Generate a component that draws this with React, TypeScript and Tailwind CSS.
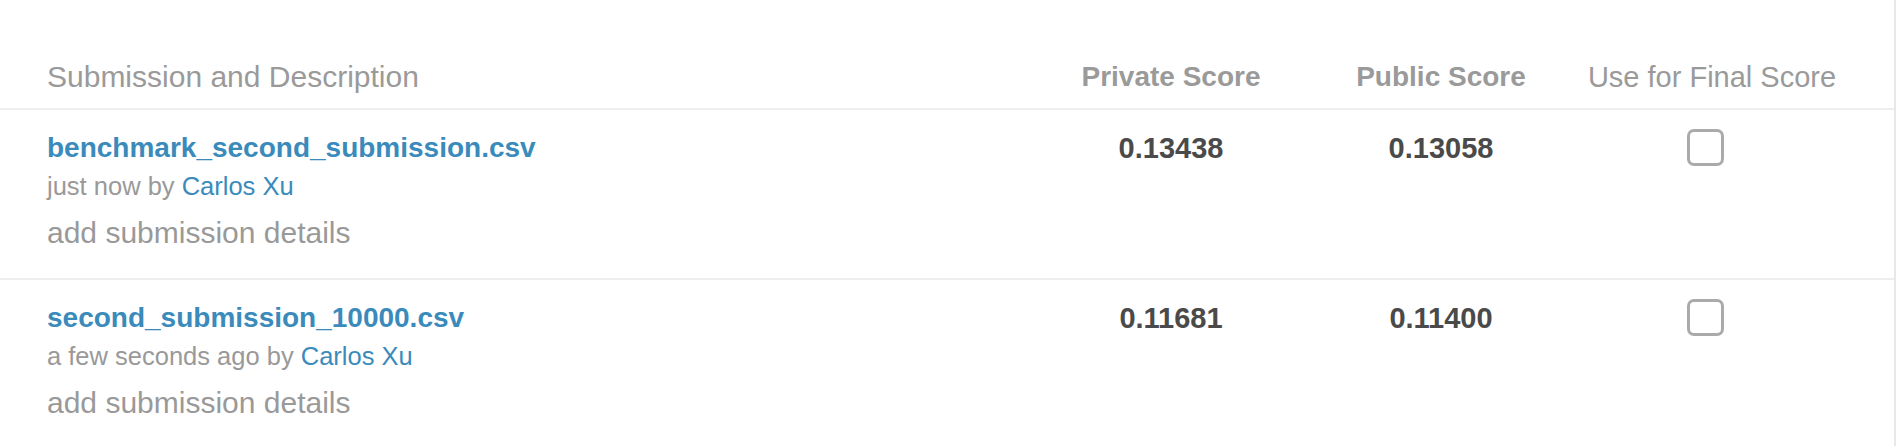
import React from "react";

interface Submission {
  file: string;
  when: string;
  author: string;
  privateScore: string;
  publicScore: string;
}

const submissions: Submission[] = [
  { file: "benchmark_second_submission.csv", when: "just now", author: "Carlos Xu", privateScore: "0.13438", publicScore: "0.13058" },
  { file: "second_submission_10000.csv", when: "a few seconds ago", author: "Carlos Xu", privateScore: "0.11681", publicScore: "0.11400" },
];

const cols = "grid grid-cols-[1fr_270px_270px_272px] pl-[47px] pr-[46px]";

export default function App() {
  return (
    <div className="min-h-[446px] w-full bg-white border-r-2 border-[#e8e8e8] font-['Liberation_Sans',Arial,sans-serif]">
      {/* Header */}
      <div className={`${cols} pt-[59px] pb-[13px] border-b-2 border-[#eeeeee] text-[#9a9a9a]`}>
        <div className="text-[30px] leading-[36px]">Submission and Description</div>
        <div className="text-center text-[28px] leading-[36px] font-bold">Private Score</div>
        <div className="text-center text-[28px] leading-[36px] font-bold">Public Score</div>
        <div className="text-center text-[29px] leading-[36px]">Use for Final Score</div>
      </div>

      {/* Rows */}
      {submissions.map((s) => (
        <div key={s.file} className={`${cols} pt-[17px] pb-[27px] border-b-2 border-[#eeeeee]`}>
          <div className="flex flex-col">
            <a href="#" className="text-[28px] leading-[42px] font-bold text-[#3a8bbb]">{s.file}</a>
            <p className="mt-[1px] text-[25.5px] leading-[32px] text-[#999999]">
              {s.when} by <a href="#" className="text-[#3a8bbb]">{s.author}</a>
            </p>
            <p className="mt-[13px] text-[30px] leading-[36px] text-[#999999]">add submission details</p>
          </div>
          <div className="text-center text-[29px] leading-[42px] font-bold text-[#4a4a4a]">{s.privateScore}</div>
          <div className="text-center text-[29px] leading-[42px] font-bold text-[#4a4a4a]">{s.publicScore}</div>
          <div className="flex justify-center pr-[14px]">
            <div className="mt-[2px] w-[37px] h-[37px] rounded-[7px] border-[3px] border-[#aaaaaa] bg-white" />
          </div>
        </div>
      ))}
    </div>
  );
}
